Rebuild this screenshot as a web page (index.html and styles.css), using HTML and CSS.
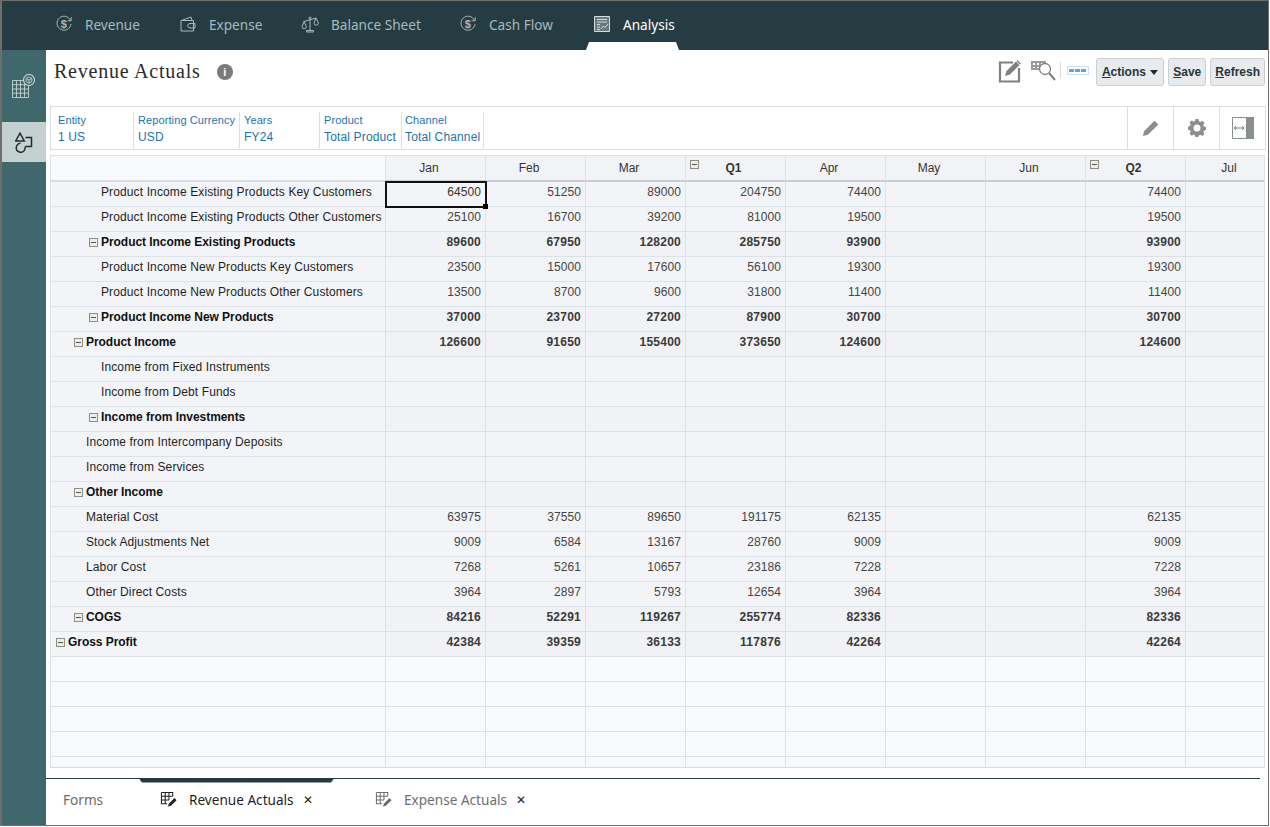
FILE: index.html
```html
<!DOCTYPE html>
<html lang="en">
<head>
<meta charset="utf-8">
<title>Revenue Actuals</title>
<link rel="stylesheet" href="styles.css">
</head>
<body>
<div class="frame">
  <nav class="topnav">
    <a class="nav-item w-rev"><svg class="nav-icon" viewBox="0 0 18 18"><path d="M15.500 5.500A7 7 0 1 0 16 9"/><path d="M16.200 2.200v3.600h-3.600"/><text x="8.800" y="12.800" class="dollar">$</text></svg><span>Revenue</span></a>
    <a class="nav-item w-exp"><svg class="nav-icon" viewBox="0 0 18 18"><path d="M2 5.500h12.500v10.500H2z"/><path d="M2.500 5.500L12 2l1 3.500"/><path d="M16 8.500h-5a2 2 0 0 0 0 4.500h5z"/></svg><span>Expense</span></a>
    <a class="nav-item w-bal"><svg class="nav-icon" viewBox="0 0 18 18"><path d="M3 6.500L15 3M9 4.500V15M5.500 15.500h7v1.500h-7z"/><path d="M3 6.500L1 11.500a2.200 2.200 0 0 0 4.400 0zM15 3l-2 5a2.200 2.200 0 0 0 4.400 0z"/><circle cx="9" cy="3" r="1"/></svg><span>Balance Sheet</span></a>
    <a class="nav-item w-cash"><svg class="nav-icon" viewBox="0 0 18 18"><path d="M15.500 5.500A7 7 0 1 0 16 9"/><path d="M16.200 2.200v3.600h-3.600"/><text x="8.800" y="12.800" class="dollar">$</text></svg><span>Cash Flow</span></a>
    <a class="nav-item active"><svg class="nav-icon an" viewBox="0 0 18 18"><path class="sheet" d="M1.500 1.500h15v15h-15z"/><path d="M4 4.500h10M4 7h10M4 9.500h3M4 12h3M4 14.500h3"/><path d="M8 14l2.500-3 1.500 1.500 3-3.500"/></svg><span>Analysis</span></a>
  </nav>
  <div class="body">
    <aside class="rail">
      <div class="rail-btn first"><svg class="rail-icon" viewBox="0 0 26 24"><path d="M1.500 6.500h16v17h-16zM1.500 10.700h16M1.500 15h16M1.500 19.200h16M5.500 6.500v17M9.500 6.500v17M13.500 6.500v17"/><circle class="disc" cx="18" cy="6" r="5.500"/><path d="M18 2.800l2.800 1.600v3.200L18 9.200l-2.800-1.600V4.400zM15.200 4.400L18 6l2.800-1.600M18 6v3.200"/></svg></div>
      <div class="rail-btn selected"><svg class="rail-icon dark" viewBox="0 0 18 22"><path d="M5 1.200L9.300 9H.7z"/><path d="M10.500 5.500h6v9h-6"/><path d="M10 14.500a4.500 4.500 0 1 1-4.500-3.200"/></svg></div>
    </aside>
    <main class="main">
      <header class="page-head">
        <div class="title-wrap">
          <h1 class="title">Revenue Actuals</h1>
          <span class="info">i</span>
        </div>
        <div class="tools">
          <svg class="ic-edit" viewBox="0 0 24 24"><path d="M15 3.500H2v19h19V9"/><path class="fill" d="M7 17l1.500-5L18 2.500 21.500 6 12 15.500z"/><path class="fill" d="M19.500 1l3.500 3.500-1 1L18.500 2z"/></svg>
          <svg class="ic-key" viewBox="0 0 26 24"><path class="fill" d="M1 1h15v9H1z"/><path class="holes" d="M3 3h2v2H3zM7 3h2v2H7zM11 3h2v2h-2zM3 7h2v1H3zM7 7h2v1H7z"/><circle cx="15" cy="9" r="5.500"/><path class="thick" d="M19 13l6 7"/></svg>
          <span class="tool-sep"></span>
          <span class="ic-dots"><i></i><i></i><i></i></span>
          <button class="btn btn-actions"><u>A</u>ctions <span class="caret"></span></button>
          <button class="btn"><u>S</u>ave</button>
          <button class="btn"><u>R</u>efresh</button>
        </div>
      </header>
      <section class="pov">
        <div class="pov-item p-ent"><span class="pov-k">Entity</span><span class="pov-v">1 US</span></div>
        <div class="pov-item p-cur"><span class="pov-k">Reporting Currency</span><span class="pov-v">USD</span></div>
        <div class="pov-item p-yr"><span class="pov-k">Years</span><span class="pov-v">FY24</span></div>
        <div class="pov-item p-pro"><span class="pov-k">Product</span><span class="pov-v">Total Product</span></div>
        <div class="pov-item p-cha"><span class="pov-k">Channel</span><span class="pov-v">Total Channel</span></div>
        <div class="pov-tools">
          <div class="pov-tool"><svg class="ic-pencil" viewBox="0 0 18 18"><path d="M1 17l1.200-5L12.500 1.700l3.800 3.800L6 15.800z"/></svg></div>
          <div class="pov-tool"><svg class="ic-gear" viewBox="0 0 18 18"><path fill-rule="evenodd" d="M7.500 1h3l.5 2.300 1.500.7 2-1.200 2 2.100-1.200 2 .6 1.500 2.100.6v3l-2.100.5-.7 1.500 1.200 2-2.100 2-2-1.200-1.500.6-.6 2.100h-3L7 17.200l-1.500-.7-2 1.200-2-2.100 1.200-2-.7-1.400L0 11.700v-3l2-.6.700-1.500-1.200-2 2.100-2 2 1.200L7 3.100zM9 6.500a3.500 3.500 0 1 0 0 7 3.500 3.500 0 0 0 0-7z" transform="translate(0 -1)"/></svg></div>
          <div class="pov-tool"><svg class="ic-panel" viewBox="0 0 22 22"><path class="box" d="M.5.500h21v21H.500z"/><path class="bar" d="M14 0h8v22h-8z"/><path class="arr" d="M2 11h10M4 9l-2 2 2 2M10 9l2 2-2 2"/></svg></div>
        </div>
      </section>
      <section class="grid-wrap">
        <table class="grid">
          <colgroup><col class="c-head"><col class="c"><col class="c"><col class="c"><col class="c"><col class="c"><col class="c"><col class="c"><col class="c"><col class="c"></colgroup>
          <thead>
            <tr><th class="corner"></th><th>Jan</th><th>Feb</th><th>Mar</th><th class="qtr"><span class="tg hd"></span>Q1</th><th>Apr</th><th>May</th><th>Jun</th><th class="qtr"><span class="tg hd"></span>Q2</th><th>Jul</th></tr>
          </thead>
          <tbody>
            <tr><td class="lab l2">Product Income Existing Products Key Customers</td><td class="sel">64500<span class="handle"></span></td><td>51250</td><td>89000</td><td>204750</td><td>74400</td><td></td><td></td><td>74400</td><td></td></tr>
            <tr><td class="lab l2">Product Income Existing Products Other Customers</td><td>25100</td><td>16700</td><td>39200</td><td>81000</td><td>19500</td><td></td><td></td><td>19500</td><td></td></tr>
            <tr class="b"><td class="lab l2"><span class="tg"></span>Product Income Existing Products</td><td>89600</td><td>67950</td><td>128200</td><td>285750</td><td>93900</td><td></td><td></td><td>93900</td><td></td></tr>
            <tr><td class="lab l2">Product Income New Products Key Customers</td><td>23500</td><td>15000</td><td>17600</td><td>56100</td><td>19300</td><td></td><td></td><td>19300</td><td></td></tr>
            <tr><td class="lab l2">Product Income New Products Other Customers</td><td>13500</td><td>8700</td><td>9600</td><td>31800</td><td>11400</td><td></td><td></td><td>11400</td><td></td></tr>
            <tr class="b"><td class="lab l2"><span class="tg"></span>Product Income New Products</td><td>37000</td><td>23700</td><td>27200</td><td>87900</td><td>30700</td><td></td><td></td><td>30700</td><td></td></tr>
            <tr class="b"><td class="lab l1"><span class="tg"></span>Product Income</td><td>126600</td><td>91650</td><td>155400</td><td>373650</td><td>124600</td><td></td><td></td><td>124600</td><td></td></tr>
            <tr><td class="lab l2">Income from Fixed Instruments</td><td></td><td></td><td></td><td></td><td></td><td></td><td></td><td></td><td></td></tr>
            <tr><td class="lab l2">Income from Debt Funds</td><td></td><td></td><td></td><td></td><td></td><td></td><td></td><td></td><td></td></tr>
            <tr class="b"><td class="lab l2"><span class="tg"></span>Income from Investments</td><td></td><td></td><td></td><td></td><td></td><td></td><td></td><td></td><td></td></tr>
            <tr><td class="lab l1">Income from Intercompany Deposits</td><td></td><td></td><td></td><td></td><td></td><td></td><td></td><td></td><td></td></tr>
            <tr><td class="lab l1">Income from Services</td><td></td><td></td><td></td><td></td><td></td><td></td><td></td><td></td><td></td></tr>
            <tr class="b"><td class="lab l1"><span class="tg"></span>Other Income</td><td></td><td></td><td></td><td></td><td></td><td></td><td></td><td></td><td></td></tr>
            <tr><td class="lab l1">Material Cost</td><td>63975</td><td>37550</td><td>89650</td><td>191175</td><td>62135</td><td></td><td></td><td>62135</td><td></td></tr>
            <tr><td class="lab l1">Stock Adjustments Net</td><td>9009</td><td>6584</td><td>13167</td><td>28760</td><td>9009</td><td></td><td></td><td>9009</td><td></td></tr>
            <tr><td class="lab l1">Labor Cost</td><td>7268</td><td>5261</td><td>10657</td><td>23186</td><td>7228</td><td></td><td></td><td>7228</td><td></td></tr>
            <tr><td class="lab l1">Other Direct Costs</td><td>3964</td><td>2897</td><td>5793</td><td>12654</td><td>3964</td><td></td><td></td><td>3964</td><td></td></tr>
            <tr class="b"><td class="lab l1"><span class="tg"></span>COGS</td><td>84216</td><td>52291</td><td>119267</td><td>255774</td><td>82336</td><td></td><td></td><td>82336</td><td></td></tr>
            <tr class="b"><td class="lab l0"><span class="tg"></span>Gross Profit</td><td>42384</td><td>39359</td><td>36133</td><td>117876</td><td>42264</td><td></td><td></td><td>42264</td><td></td></tr>
            <tr class="empty"><td></td><td></td><td></td><td></td><td></td><td></td><td></td><td></td><td></td><td></td></tr>
            <tr class="empty"><td></td><td></td><td></td><td></td><td></td><td></td><td></td><td></td><td></td><td></td></tr>
            <tr class="empty"><td></td><td></td><td></td><td></td><td></td><td></td><td></td><td></td><td></td><td></td></tr>
            <tr class="empty"><td></td><td></td><td></td><td></td><td></td><td></td><td></td><td></td><td></td><td></td></tr>
            <tr class="empty"><td></td><td></td><td></td><td></td><td></td><td></td><td></td><td></td><td></td><td></td></tr>
          </tbody>
        </table>
      </section>
      <footer class="tabs">
        <span class="tab-label">Forms</span>
        <div class="tab tab-on">
          <svg class="tab-icon" viewBox="0 0 18 18"><path d="M1.500 1.500h12v4M1.500 1.500v12h6M1.500 5.500h12M1.500 9.500h8M5.500 1.500v12M9.500 1.500v8"/><path class="pen" d="M8.500 16.500l.8-3 6-6 2.200 2.200-6 6z"/></svg>
          <span>Revenue Actuals</span><span class="x">&#x2715;</span>
        </div>
        <div class="tab tab-off">
          <svg class="tab-icon" viewBox="0 0 18 18"><path d="M1.500 1.500h12v4M1.500 1.500v12h6M1.500 5.500h12M1.500 9.500h8M5.500 1.500v12M9.500 1.500v8"/><path class="pen" d="M8.500 16.500l.8-3 6-6 2.200 2.200-6 6z"/></svg>
          <span>Expense Actuals</span><span class="x">&#x2715;</span>
        </div>
      </footer>
    </main>
  </div>
</div>
</body>
</html>
```
FILE: styles.css
```css
* { box-sizing: border-box; }
html, body { margin: 0; padding: 0; background: #fff; }
.frame {
  width: 1269px; height: 826px;
  border: 1px solid #6e6e6e; border-left-width: 2px; border-top-width: 1px;
  display: flex; flex-direction: column;
  font-family: "Liberation Sans", Arial, sans-serif;
  overflow: hidden;
}

/* top navigation */
.topnav {
  height: 49px; flex: none; background: #253c42;
  display: flex; align-items: stretch; padding-left: 53px;
  font-family: "Noto Sans", sans-serif; font-size: 13.6px; color: #a8b8bf;
}
.nav-item { display: flex; align-items: center; gap: 12px; position: relative; padding-bottom: 3px; }
.nav-icon { width: 18px; height: 18px; fill: none; stroke: currentColor; stroke-width: 1; flex: none; }
.dollar { font: 700 11px "Liberation Sans", sans-serif; fill: currentColor; stroke: none; text-anchor: middle; }
.w-rev { width: 124px; }
.w-exp { width: 122px; }
.w-bal { width: 158px; }
.w-cash { width: 134px; }
.active { color: #fff; }
.an { color: #d5dcdd; }
.an .sheet { fill: #66797c; }
.active::after {
  content: ""; position: absolute; left: -7px; bottom: 0; width: 93px; height: 8px; background: #fff;
  clip-path: polygon(3px 0, 90px 0, 100% 100%, 0 100%);
}

/* body */
.body { flex: 1; display: flex; min-height: 0; }
.rail { width: 44px; flex: none; background: #40676b; padding-top: 12px; }
.rail-btn { height: 40px; display: flex; align-items: center; justify-content: center; }
.rail-btn.first { padding-top: 8px; }
.rail-btn + .rail-btn { margin-top: 20px; }
.rail-btn.selected { background: #c5d1d1; }
.rail-icon { width: 26px; height: 24px; fill: none; stroke: #c5d1d1; stroke-width: .9; }
.rail-icon .disc { fill: #40676b; stroke-width: 1.200; }
.rail-icon.dark { width: 18px; height: 22px; stroke: #1f2d30; stroke-width: 1.500; margin-top: 2px; }
.main { flex: 1; min-width: 0; display: flex; flex-direction: column; background: #fff; }

/* page header */
.page-head { height: 56px; flex: none; display: flex; justify-content: space-between; padding: 8px 3px 0 8px; }
.title-wrap { display: flex; align-items: flex-start; gap: 16px; }
.title { margin: 0; font: 400 20px/26px "Liberation Serif", serif; letter-spacing: .78px; color: #2b2b2b; }
.info {
  width: 16px; height: 16px; border-radius: 50%; background: #7b7b7b; color: #fff; margin-top: 6px;
  font: 700 11px/16px "Liberation Sans", sans-serif; text-align: center;
}
.tools { display: flex; align-items: flex-start; }
.ic-edit { width: 24px; height: 24px; margin: 1px 8px 0 0; fill: none; stroke: #808080; stroke-width: 2.200; }
.ic-edit .fill { fill: #808080; stroke: none; }
.ic-key { width: 26px; height: 24px; margin: 2px 2px 0 0; fill: none; stroke: #808080; stroke-width: 1.300; }
.ic-key .fill { fill: #9a9a9a; stroke: none; }
.ic-key .holes { fill: #fff; stroke: none; }
.ic-key circle { fill: #fff; }
.ic-key .thick { stroke-width: 2; }
.tool-sep { width: 1px; height: 16px; background: #d5dadd; margin: 4px 6px 0 2px; }
.ic-dots { width: 22px; height: 9px; margin: 8px 7px 0 0; border: 1px solid #cfe0ee; display: flex; align-items: center; justify-content: center; gap: 1px; }
.ic-dots i { width: 5px; height: 3px; background: #5aa5e8; }
.btn {
  height: 28px; margin-left: 4px; padding: 0 4px; background: #e7ebee; border: 1px solid #c8d0d6; border-radius: 3px;
  font: 700 12px "Liberation Sans", sans-serif; color: #27343a; display: flex; align-items: center; white-space: pre;
}
.tools .btn-actions { margin-left: 0; padding: 0 5px; }
.caret { width: 0; height: 0; border: 4.500px solid transparent; border-top: 5px solid #1f2a2f; border-bottom: 0; margin-left: 1px; }

/* point of view */
.pov { height: 44px; flex: none; margin: 0 2px 5px 4px; border: 1px solid #d8e0e6; display: flex; padding: 5px 0 1px; color: #1d72aa; background: #fff; }
.pov-item { display: flex; flex-direction: column; border-right: 1px solid #d8e0e6; padding-left: 4px; white-space: nowrap; }
.pov-k { font-size: 11px; line-height: 17px; letter-spacing: .1px; }
.pov-v { font-size: 12px; line-height: 17px; letter-spacing: .15px; }
.p-ent { width: 83px; padding-left: 7px; }
.p-cur { width: 106px; }
.p-yr { width: 80px; }
.p-pro { width: 82px; }
.p-cha { width: 82px; padding-left: 3px; }
.pov-tools { margin-left: auto; display: flex; margin-top: -5px; margin-bottom: -1px; }
.pov-tool { width: 46px; border-left: 1px solid #d8e0e6; display: flex; align-items: center; justify-content: center; }
.ic-pencil { width: 18px; height: 18px; fill: #8d8d8d; }
.ic-gear { width: 18px; height: 18px; fill: #8a8f92; }
.ic-panel { width: 22px; height: 22px; fill: none; }
.ic-panel .box { stroke: #8a8f92; }
.ic-panel .bar { fill: #8a8f92; }
.ic-panel .arr { stroke: #7f7f7f; stroke-width: 1; }

/* grid */
.grid-wrap { height: 613px; flex: none; margin: 0 3px 0 4px; border: 1px solid #dbe2e8; border-bottom: 1px solid #d5dde3; overflow: hidden; background: #f7f9fc; }
.grid { border-collapse: separate; border-spacing: 0; table-layout: fixed; width: 1235px; font-size: 12px; color: #444; }
.c-head { width: 335px; }
.c { width: 100px; }
.grid th, .grid td { padding: 0; border-right: 1px solid #dbe2e8; border-bottom: 1px solid #dbe2e8; }
.grid th {
  height: 26px; background: #f2f3f6; font-weight: 400; color: #333; border-bottom: 2px solid #c9ced2;
  padding: 0 13px 0 0; text-align: center; position: relative;
}
.grid th.corner { background: #f7f9fc; border-bottom-color: #d5dde3; }
.grid th.qtr { font-weight: 700; padding-right: 4px; }
.grid td {
  height: 25px; background: #f3f4f8; text-align: right; padding: 0 4px 5px 0; white-space: nowrap; position: relative; letter-spacing: .1px;
}
.grid td.lab { background: #f3f4f8; text-align: left; color: #1f1f1f; padding-right: 0; letter-spacing: .12px; }
.b td { font-weight: 700; background: #f1f2f5; color: #3a3a3a; letter-spacing: .25px; }
.grid .b td.lab { color: #111; background: #f3f4f8; letter-spacing: -.05px; }
.grid .empty td { background: #f7f9fc; }
.l0 { padding-left: 17px !important; }
.l1 { padding-left: 35px !important; }
.l2 { padding-left: 50px !important; }
.tg {
  display: inline-block; width: 9px; height: 9px; margin: 0 3px 0 -12px; vertical-align: -1px;
  border: 1px solid #8f8f84;
  background: linear-gradient(#555, #555) center / 5px 1px no-repeat, #eeeee8;
}
.tg.hd { position: absolute; left: 4px; top: 4px; margin: 0; }
.grid td.sel { outline: 2px solid #111; outline-offset: -1px; color: #333; z-index: 1; }
.handle { position: absolute; right: -3px; bottom: -3px; width: 5px; height: 5px; background: #000; }

/* bottom tabs */
.tabs {
  flex: 1; margin: 10px 8px 0 0; border-top: 1px solid #253c42; position: relative;
  display: flex; align-items: center; font-family: "Noto Sans", sans-serif; font-size: 13.6px;
  padding: 0 0 6px 17px;
}
.tab-label { color: #6b6b6b; width: 97px; }
.tab { display: flex; align-items: center; position: relative; }
.tab-icon { width: 17px; height: 17px; fill: none; stroke: currentColor; stroke-width: 1.100; margin-right: 12px; }
.tab-icon .pen { fill: currentColor; stroke: none; }
.x { font-size: 12px; margin-left: 9px; color: #222; }
.tab-on { color: #1f1f1f; width: 215px; }
.tab-off { color: #6e6e6e; }
.tab-on::before {
  content: ""; position: absolute; left: -21px; top: -11px; width: 195px; height: 4px; background: #253c42;
  clip-path: polygon(0 0, 100% 0, 98.500% 100%, 1.500% 100%);
}
```
